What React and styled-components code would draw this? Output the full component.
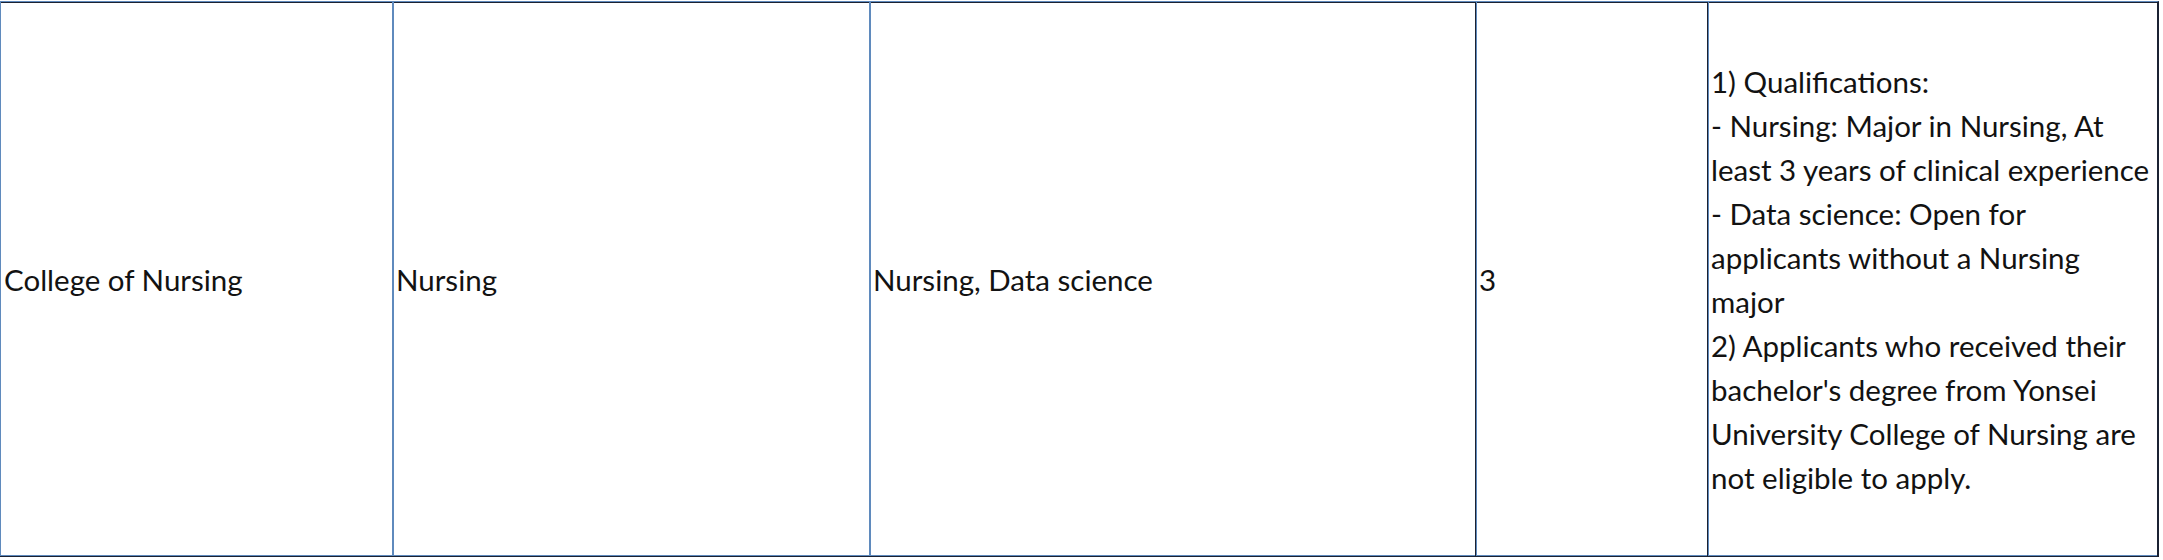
import React from 'react'
import styled, { createGlobalStyle } from 'styled-components'

const BLUE = '#5f8abd'
const DARK = '#1b2232'

const Global = createGlobalStyle`
  body {
    margin: 0;
    background: #fff;
    font-family: Lato, "Noto Sans", sans-serif;
    color: #121212;
  }
`

const Wrap = styled.div`
  padding-top: 1px;
  width: 2159px;
`

const Row = styled.div`
  display: flex;
  height: 556px;
  box-sizing: border-box;
  border-top: 1px solid ${BLUE};
  border-bottom: 1px solid ${DARK};
  border-right: 2px solid ${DARK};
  box-shadow: inset 0 1px 0 ${DARK}, inset 0 -1px 0 ${BLUE};
`

const Cell = styled.div`
  flex: 0 0 ${p => p.$w}px;
  box-sizing: border-box;
  display: flex;
  align-items: center;
  padding: 1px 2px 0 ${p => (p.$edge === 'dark' ? 3 : p.$edge === 'first' ? 3 : 2)}px;
  border-left: ${p => (p.$edge === 'first' ? 1 : p.$edge === 'dark' ? 1 : 2)}px solid
    ${p => (p.$edge === 'dark' ? DARK : BLUE)};
  box-shadow: ${p => (p.$edge === 'dark' ? `inset 1px 0 0 ${BLUE}` : 'none')};
  font-size: 29.5px;
  line-height: 44px;
`

const Notes = styled.div`
  width: 100%;
`

const rows = [
  {
    college: 'College of Nursing',
    dept: 'Nursing',
    fields: 'Nursing, Data science',
    quota: '3',
    notes: [
      '1) Qualifications:',
      '- Nursing: Major in Nursing, At least 3 years of clinical experience',
      '- Data science: Open for applicants without a Nursing major',
      "2) Applicants who received their bachelor's degree from Yonsei University College of Nursing are not eligible to apply.",
    ],
  },
]

export default function App() {
  return (
    <>
      <Global />
      <Wrap>
        {rows.map(r => (
          <Row key={r.college}>
            <Cell $w={392} $edge="first">{r.college}</Cell>
            <Cell $w={477}>{r.dept}</Cell>
            <Cell $w={606}>{r.fields}</Cell>
            <Cell $w={232} $edge="dark">{r.quota}</Cell>
            <Cell $w={450} $edge="dark">
              <Notes>
                {r.notes.map((n, i) => (
                  <div key={i}>{n}</div>
                ))}
              </Notes>
            </Cell>
          </Row>
        ))}
      </Wrap>
    </>
  )
}
